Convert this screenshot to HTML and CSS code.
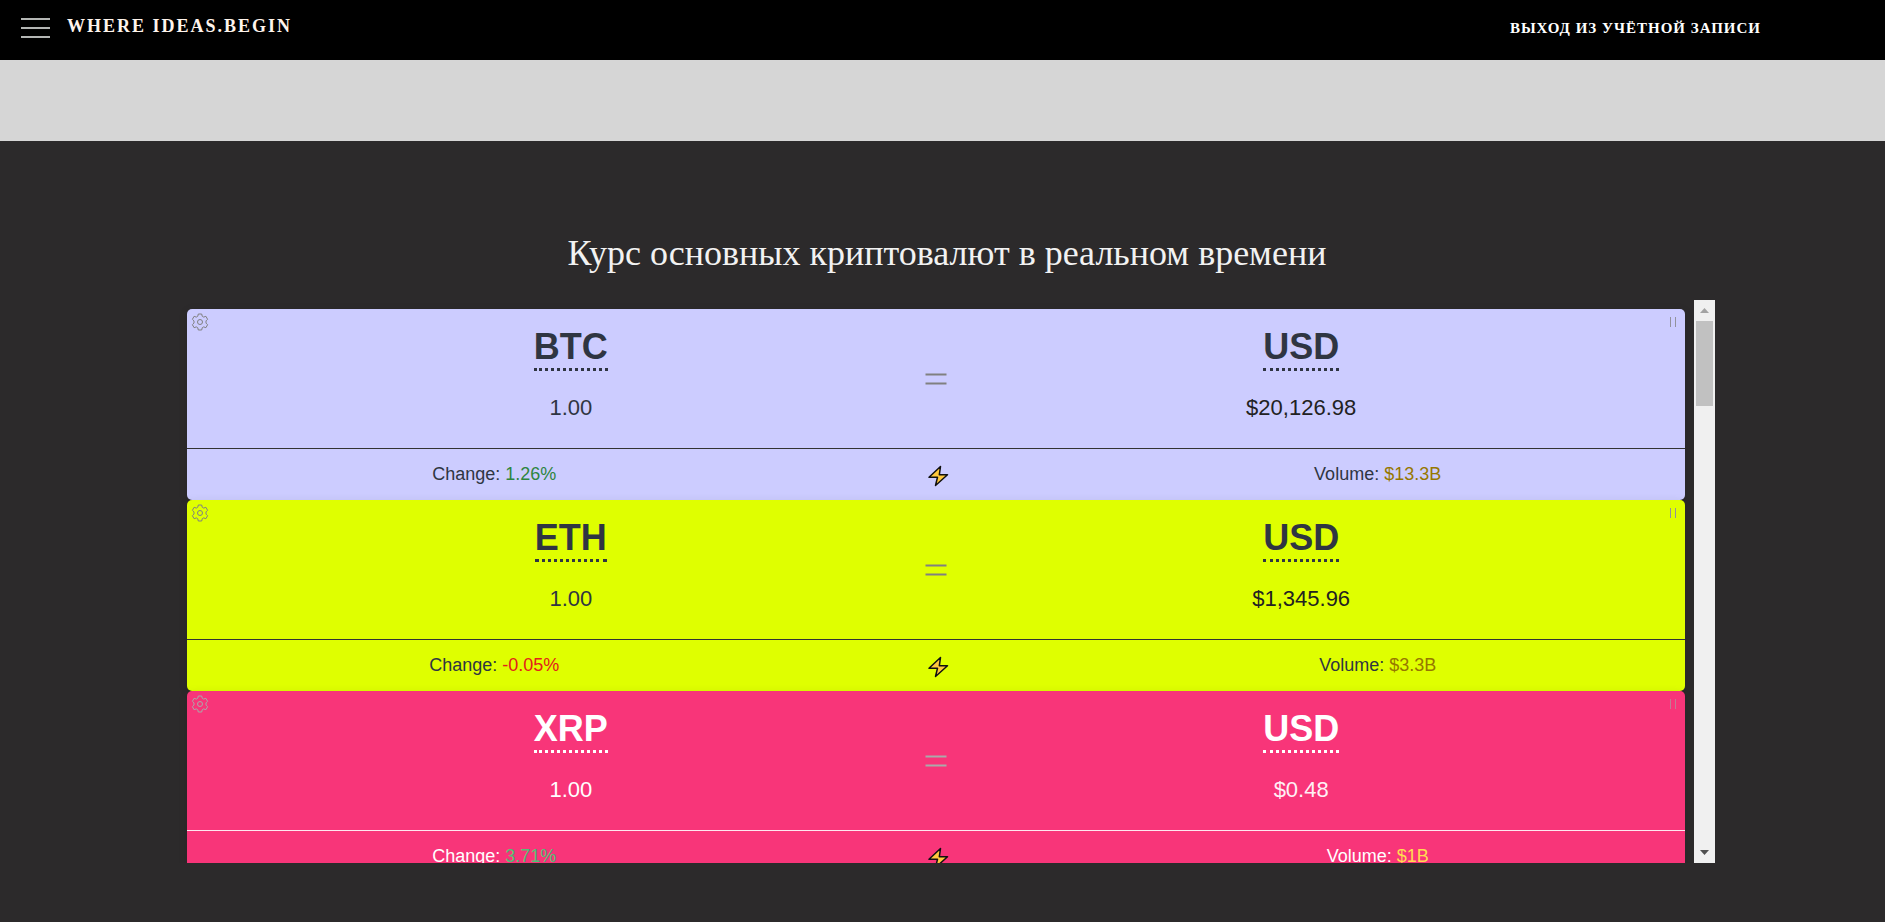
FILE: index.html
```html
<!DOCTYPE html>
<html lang="ru">
<head>
<meta charset="utf-8">
<title>Where Ideas.Begin</title>
<link rel="stylesheet" href="styles.css">
</head>
<body>
<svg class="sprite" aria-hidden="true">
  <symbol id="gear" viewBox="0 0 18 18">
    <path d="M7.300 1h3.400l.5 2.200 1.500.9 2.200-.8 1.700 3-1.600 1.600v2.200l1.600 1.600-1.700 3-2.200-.8-1.500.9-.5 2.200H7.300l-.5-2.200-1.500-.9-2.200.8-1.700-3L3 10.100V7.900L1.400 6.300l1.700-3 2.200.8 1.500-.9z"/>
    <circle cx="9" cy="9" r="2.500"/>
  </symbol>
  <symbol id="equal" viewBox="0 0 22 12"><path d="M.5 1.500h21M.5 10.500h21"/></symbol>
  <symbol id="bolt" viewBox="0 0 22 22"><path d="M13.500 1.500 2 12.300h8.500L8.500 20.500 20.500 9.800h-8.200z"/></symbol>
</svg>

<header class="topbar">
  <button class="menu" type="button" aria-label="Меню"><span></span><span></span><span></span></button>
  <a class="brand" href="#">WHERE IDEAS.BEGIN</a>
  <a class="logout" href="#">ВЫХОД ИЗ УЧЁТНОЙ ЗАПИСИ</a>
</header>
<div class="band"></div>

<main class="rates">
  <h1 class="title">Курс основных криптовалют в реальном времени</h1>
  <div class="frame">
    <div class="list">
      <article class="card btc">
        <button class="settings" type="button" aria-label="Settings"><svg><use href="#gear"/></svg></button>
        <button class="pause" type="button" aria-label="Pause"></button>
        <div class="pair">
          <div class="side"><a class="code" href="#">BTC</a><span class="amount">1.00</span></div>
          <svg class="equal"><use href="#equal"/></svg>
          <div class="side"><a class="code" href="#">USD</a><span class="amount price">$20,126.98</span></div>
        </div>
        <div class="stats">
          <span>Change: <b class="up">1.26%</b></span>
          <svg class="bolt"><use href="#bolt"/></svg>
          <span>Volume: <b class="volume">$13.3B</b></span>
        </div>
      </article>
      <article class="card eth">
        <button class="settings" type="button" aria-label="Settings"><svg><use href="#gear"/></svg></button>
        <button class="pause" type="button" aria-label="Pause"></button>
        <div class="pair">
          <div class="side"><a class="code" href="#">ETH</a><span class="amount">1.00</span></div>
          <svg class="equal"><use href="#equal"/></svg>
          <div class="side"><a class="code" href="#">USD</a><span class="amount price">$1,345.96</span></div>
        </div>
        <div class="stats">
          <span>Change: <b class="down">-0.05%</b></span>
          <svg class="bolt"><use href="#bolt"/></svg>
          <span>Volume: <b class="volume">$3.3B</b></span>
        </div>
      </article>
      <article class="card xrp">
        <button class="settings" type="button" aria-label="Settings"><svg><use href="#gear"/></svg></button>
        <button class="pause" type="button" aria-label="Pause"></button>
        <div class="pair">
          <div class="side"><a class="code" href="#">XRP</a><span class="amount">1.00</span></div>
          <svg class="equal"><use href="#equal"/></svg>
          <div class="side"><a class="code" href="#">USD</a><span class="amount price">$0.48</span></div>
        </div>
        <div class="stats">
          <span>Change: <b class="up">3.71%</b></span>
          <svg class="bolt"><use href="#bolt"/></svg>
          <span>Volume: <b class="volume">$1B</b></span>
        </div>
      </article>
    </div>
    <div class="scrollbar">
      <button class="arrow" type="button" aria-label="Вверх"><svg viewBox="0 0 9 5"><path d="M0 5 4.500 0 9 5z"/></svg></button>
      <div class="thumb"></div>
      <button class="arrow end" type="button" aria-label="Вниз"><svg viewBox="0 0 9 5"><path d="M0 0h9L4.500 5z"/></svg></button>
    </div>
  </div>
</main>
</body>
</html>
```
FILE: styles.css
```css
* { box-sizing: border-box; }

body {
  margin: 0;
  min-height: 100vh;
  background: #2c2a2b;
  font-family: "Liberation Serif", "Times New Roman", serif;
}

button {
  padding: 0;
  border: 0;
  background: none;
  cursor: pointer;
}

a {
  color: inherit;
  text-decoration: none;
}

.sprite {
  position: absolute;
  width: 0;
  height: 0;
}

/* Top bar */
.topbar {
  display: flex;
  align-items: flex-start;
  height: 60px;
  padding: 14px 124px 0 21px;
  background: #000;
  font-weight: bold;
}

.menu {
  display: flex;
  flex-direction: column;
  gap: 7px;
  width: 29px;
  margin: 4px 17px 0 0;
}

.menu span {
  height: 2px;
  background: #b4b6b4;
}

.brand {
  color: #fff4ec;
  font-size: 18px;
  line-height: 24px;
  letter-spacing: 2px;
}

.logout {
  margin-left: auto;
  color: #fff;
  font-size: 15px;
  line-height: 28px;
  letter-spacing: 1px;
}

.band {
  height: 81px;
  background: #d6d6d6;
}

/* Rates */
.rates { padding: 88px 0 59px; }

.title {
  margin: 0 0 23px;
  padding-left: 9px;
  color: #f2f2f2;
  font-size: 36px;
  font-weight: normal;
  line-height: 48px;
  text-align: center;
}

.frame {
  display: flex;
  width: 82%;
  height: 563px;
  margin: 0 auto;
  font-family: "Liberation Sans", Arial, sans-serif;
}

.list {
  flex: 1;
  padding: 9px 9px 0 17px;
  overflow: hidden;
}

.card {
  position: relative;
  border-radius: 5px;
  box-shadow: 0 2px 10px rgba(0, 0, 0, .1);
  color: #2f3542;
}

.btc { background: #ccccff; }
.eth { background: #dfff00; }
.xrp { background: #f83579; color: #fff; }

.settings {
  position: absolute;
  top: 4px;
  left: 4px;
  width: 18px;
  height: 18px;
}

.settings svg {
  display: block;
  width: 18px;
  height: 18px;
  fill: none;
  stroke: #808080;
  stroke-linejoin: round;
}

.pause {
  position: absolute;
  top: 8px;
  right: 9px;
  width: 6px;
  height: 10px;
  border: solid #92929c;
  border-width: 0 1px;
}

.pair {
  display: grid;
  grid-template-columns: 1fr 42px 1fr;
  align-items: center;
  justify-items: center;
  height: 140px;
  padding: 0 40px;
  border-bottom: 1px solid #333;
}

.side {
  display: flex;
  flex-direction: column;
  align-items: center;
  gap: 22px;
  margin-bottom: 8px;
}

.code {
  border-bottom: 3px dotted;
  font-size: 36px;
  font-weight: bold;
  line-height: 42px;
}

.amount {
  font-size: 22px;
  line-height: 30px;
}

.price { color: #222; }

.equal {
  width: 22px;
  height: 12px;
  stroke: #808080;
  stroke-width: 2;
}

.stats {
  display: grid;
  grid-template-columns: 1fr 268px 1fr;
  align-items: center;
  justify-items: center;
  height: 51px;
  font-size: 18px;
}

.stats b { font-weight: normal; }

.bolt {
  width: 22px;
  height: 22px;
  margin: 3px 0 0 4px;
  fill: #ffc83d;
  stroke: #111;
  stroke-width: 1.5;
  stroke-linejoin: round;
}

.up { color: #2e8540; }
.down { color: #e3201b; }
.volume { color: #967700; }

.xrp .pair { border-color: #ffe6ef; }
.xrp .price { color: #fff0f5; }
.xrp .up { color: #4fc276; }
.xrp .volume { color: #ffdc50; }
.xrp .equal,
.xrp .settings svg { stroke: #aaa; }
.xrp .pause { border-color: #c27a94; }

/* Scrollbar */
.scrollbar {
  display: flex;
  flex-direction: column;
  width: 21px;
  background: #f0f0f0;
}

.arrow {
  height: 21px;
  line-height: 0;
}

.arrow svg {
  width: 9px;
  height: 5px;
  fill: #a3a3a3;
}

.end { margin-top: auto; }
.end svg { fill: #505050; }

.thumb {
  height: 85px;
  margin: 0 2px;
  background: #c1c1c1;
}
```
